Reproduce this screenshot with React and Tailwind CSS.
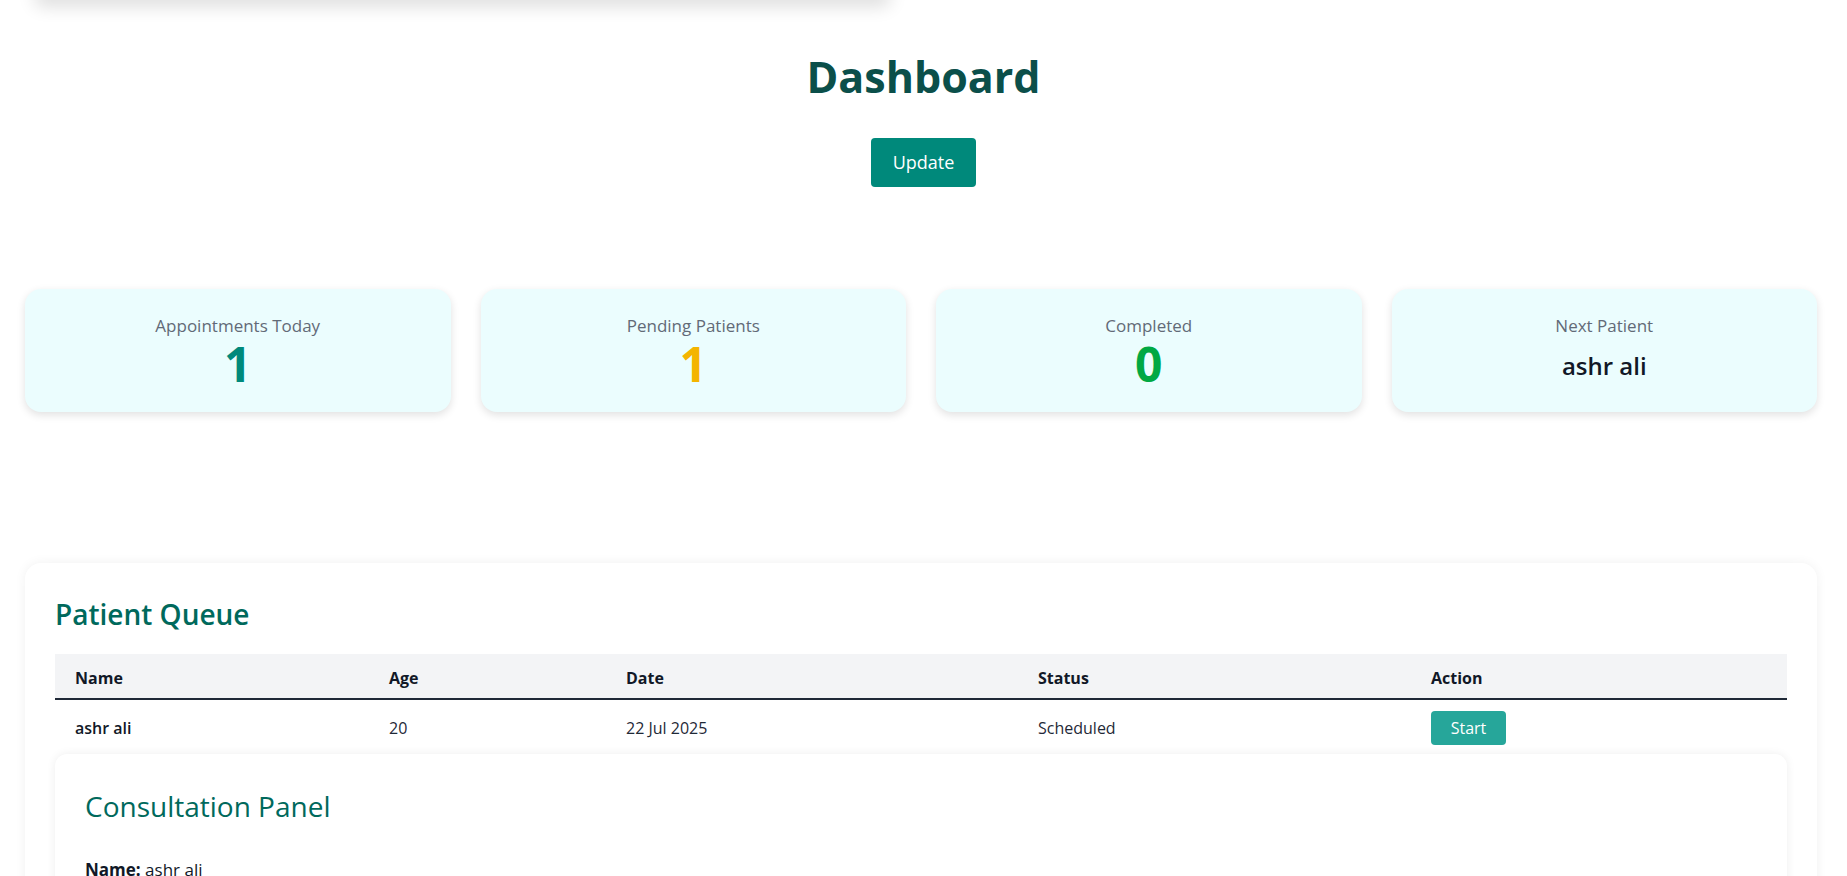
import React from 'react';

const stats = [
  { label: 'Appointments Today', value: '1', color: 'text-[#00897b]' },
  { label: 'Pending Patients', value: '1', color: 'text-[#f4b400]' },
  { label: 'Completed', value: '0', color: 'text-[#00a843]' },
];

const queue = [
  { name: 'ashr ali', age: 20, date: '22 Jul 2025', status: 'Scheduled' },
];

function StatCard({ label, children }) {
  return (
    <div className="flex flex-col items-center rounded-2xl bg-[#ebfdfe] px-6 pt-[26px] pb-6 shadow-[0_3px_8px_rgba(0,0,0,0.12)]">
      <div className="text-[17px] leading-[22px] text-[#626a77]">{label}</div>
      <div className="mt-[3px] h-[48px]">{children}</div>
    </div>
  );
}

export default function App() {
  return (
    <div
      className="min-h-screen bg-white text-[#1f2937]"
      style={{ fontFamily: '"Segoe UI", "Open Sans", "Noto Sans", sans-serif' }}
    >
      <div className="flex flex-col">
        {/* nav bar scrolled out of view, only its shadow shows */}
        <div className="-mt-[20px] ml-[35px] h-[20px] w-[855px] rounded-b-md bg-white shadow-[0_6px_18px_rgba(0,0,0,0.14)]" />

        <h1 className="mt-[49px] text-center text-[43px] font-bold leading-[55px] text-[#0b4f4a]">
          Dashboard
        </h1>

        <div className="mt-[34px] flex justify-center">
          <button className="h-[49px] w-[105px] rounded-[4px] bg-[#00897b] text-[18px] text-white">
            Update
          </button>
        </div>

        <div className="mt-[102px] grid grid-cols-4 gap-[30px] pl-[25px] pr-[30px]">
          {stats.map((s) => (
            <StatCard key={s.label} label={s.label}>
              <div className={`text-[48px] font-bold leading-[48px] ${s.color}`}>
                {s.value}
              </div>
            </StatCard>
          ))}
          <StatCard label="Next Patient">
            <div className="text-[24px] font-semibold leading-[52px] text-[#111827]">
              ashr ali
            </div>
          </StatCard>
        </div>

        <div className="mt-[151px] ml-[25px] mr-[30px] rounded-2xl bg-white p-[30px] shadow-[0_0_12px_rgba(0,0,0,0.06)]">
          <h2 className="text-[28px] font-semibold leading-[42px] text-[#00695c]">
            Patient Queue
          </h2>

          <table className="mt-[19px] w-full table-fixed border-collapse text-left text-[16px]">
            <thead>
              <tr className="border-b-2 border-[#1f2937] bg-[#f3f4f6]">
                <th className="w-[314px] px-5 pt-3 pb-2 font-bold leading-6 text-[#111827]">Name</th>
                <th className="w-[237px] px-5 pt-3 pb-2 font-bold leading-6 text-[#111827]">Age</th>
                <th className="w-[412px] px-5 pt-3 pb-2 font-bold leading-6 text-[#111827]">Date</th>
                <th className="w-[393px] px-5 pt-3 pb-2 font-bold leading-6 text-[#111827]">Status</th>
                <th className="px-5 pt-3 pb-2 font-bold leading-6 text-[#111827]">Action</th>
              </tr>
            </thead>
            <tbody>
              {queue.map((p) => (
                <tr key={p.name}>
                  <td className="px-5 pt-[11px] pb-[9px] align-middle font-semibold leading-6 text-[#111827]">{p.name}</td>
                  <td className="px-5 pt-[11px] pb-[9px] align-middle leading-6">{p.age}</td>
                  <td className="px-5 pt-[11px] pb-[9px] align-middle leading-6">{p.date}</td>
                  <td className="px-5 pt-[11px] pb-[9px] align-middle leading-6">{p.status}</td>
                  <td className="px-5 pt-[11px] pb-[9px] align-middle">
                    <button className="h-[34px] w-[75px] rounded-[4px] bg-[#26a69a] text-[16px] text-white">
                      Start
                    </button>
                  </td>
                </tr>
              ))}
            </tbody>
          </table>

          <div className="rounded-xl bg-white p-[30px] shadow-[0_0_10px_rgba(0,0,0,0.07)]">
            <h3 className="text-[28px] font-normal leading-[45px] text-[#00695c]">
              Consultation Panel
            </h3>
            <p className="mt-[27px] text-[17px] leading-[27px] text-[#111827]">
              <span className="font-bold">Name:</span> ashr ali
            </p>
            <p className="mt-2 text-[17px] leading-[27px] text-[#111827]">
              <span className="font-bold">Age:</span> 20
            </p>
            <p className="mt-2 text-[17px] leading-[27px] text-[#111827]">
              <span className="font-bold">Date:</span> 22 Jul 2025
            </p>
          </div>
        </div>
      </div>
    </div>
  );
}
